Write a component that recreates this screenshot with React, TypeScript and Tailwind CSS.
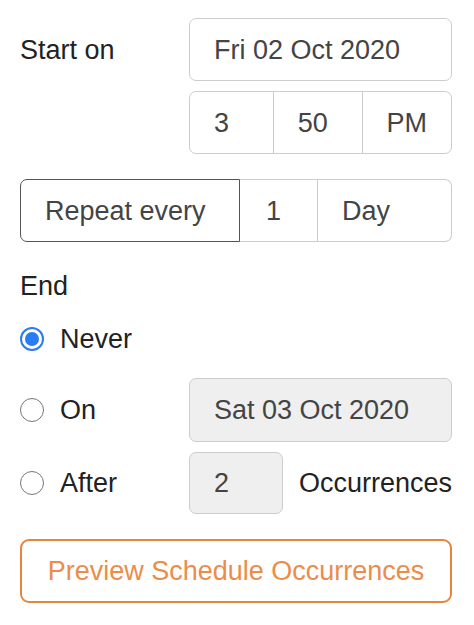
const cell = 'flex items-center px-[24px] text-[#444]'

const Radio = ({ checked }: { checked?: boolean }) =>
  checked ? (
    <span className="flex h-[24px] w-[24px] items-center justify-center rounded-full border-2 border-[#2b7bf3]">
      <span className="h-[14px] w-[14px] rounded-full bg-[#2b7bf3]" />
    </span>
  ) : (
    <span className="h-[24px] w-[24px] rounded-full border-[1.5px] border-[#777]" />
  )

const RadioLabel = ({ label, checked }: { label: string; checked?: boolean }) => (
  <label className="flex w-[169px] shrink-0 items-center gap-[16px] text-[#222]">
    <Radio checked={checked} />
    <span>{label}</span>
  </label>
)

export default function App() {
  return (
    <div className="bg-white pl-[20px] pr-[22px] pt-[18px] pb-[22px] font-['Liberation_Sans',Arial,sans-serif] text-[27px] leading-[30px]">
      <div className="flex items-center">
        <span className="w-[169px] shrink-0 text-[#222]">Start on</span>
        <div className={`${cell} h-[63px] flex-1 rounded-[7px] border border-[#ccc] bg-white`}>Fri 02 Oct 2020</div>
      </div>

      <div className="ml-[169px] mt-[10px] flex h-[63px] rounded-[7px] border border-[#ccc]">
        <div className={`${cell} w-[84px] border-r border-[#ccc]`}>3</div>
        <div className={`${cell} w-[89px] border-r border-[#ccc]`}>50</div>
        <div className={`${cell} flex-1`}>PM</div>
      </div>

      <div className="mt-[25px] flex h-[63px]">
        <div className={`${cell} w-[220px] rounded-l-[7px] border border-[#555]`}>Repeat every</div>
        <div className={`${cell} w-[78px] border-y border-r border-[#ccc] pl-[26px]`}>1</div>
        <div className={`${cell} flex-1 rounded-r-[7px] border-y border-r border-[#ccc]`}>Day</div>
      </div>

      <div className="mt-[29px] text-[#222]">End</div>

      <div className="mt-[23px] flex items-center">
        <RadioLabel label="Never" checked />
      </div>

      <div className="mt-[24px] flex items-center">
        <RadioLabel label="On" />
        <div className={`${cell} h-[64px] flex-1 rounded-[7px] border border-[#ccc] bg-[#efefef]`}>Sat 03 Oct 2020</div>
      </div>

      <div className="mt-[10px] flex items-center">
        <RadioLabel label="After" />
        <div className={`${cell} h-[62px] w-[95px] rounded-[7px] border border-[#ccc] bg-[#efefef]`}>2</div>
        <span className="ml-[16px] text-[#222]">Occurrences</span>
      </div>

      <button className="mt-[25px] flex h-[64px] w-full items-center justify-center rounded-[9px] border-2 border-[#e9843f] text-[#ec8c4a]">
        Preview Schedule Occurrences
      </button>
    </div>
  )
}
